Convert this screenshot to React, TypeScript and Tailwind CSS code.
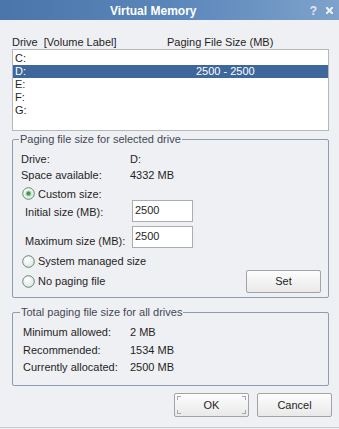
import React from "react";

function Radio({ checked }: { checked?: boolean }) {
  return (
    <svg width="13" height="13" viewBox="0 0 13 13" className="shrink-0">
      <defs>
        <radialGradient id={checked ? "rg1" : "rg0"} cx="40%" cy="35%" r="70%">
          <stop offset="0%" stopColor="#ffffff" />
          <stop offset="100%" stopColor="#dfe4e8" />
        </radialGradient>
      </defs>
      <circle cx="6.5" cy="6.5" r="5.8" fill={`url(#${checked ? "rg1" : "rg0"})`} stroke="#5f8a6c" strokeWidth="1" />
      {checked && (
        <>
          <circle cx="6.5" cy="6.5" r="3" fill="#a9d3a9" />
          <circle cx="6.5" cy="6.5" r="2" fill="#3f9a45" />
        </>
      )}
    </svg>
  );
}

function Btn({ children, focus, className }: { children: React.ReactNode; focus?: boolean; className?: string }) {
  return (
    <div
      className={
        "relative flex justify-center border border-[#a3a3a3] rounded-[2px] bg-gradient-to-b from-[#fdfdfd] to-[#e9e9e9] text-[#1e1e1e] " +
        (className ?? "")
      }
    >
      <span className="leading-[14px]">{children}</span>
      {focus && (
        <>
          <span className="absolute top-[2px] left-[2px] w-[4px] h-[4px] border-t border-l border-[#a8a8a8]" />
          <span className="absolute top-[2px] right-[2px] w-[4px] h-[4px] border-t border-r border-[#a8a8a8]" />
          <span className="absolute bottom-[2px] left-[2px] w-[4px] h-[4px] border-b border-l border-[#a8a8a8]" />
          <span className="absolute bottom-[2px] right-[2px] w-[4px] h-[4px] border-b border-r border-[#a8a8a8]" />
        </>
      )}
    </div>
  );
}

export default function App() {
  const drives = ["C:", "D:", "E:", "F:", "G:"];
  return (
    <div className="w-[339px] h-[429px] overflow-hidden bg-[#eff0f3] font-['Liberation_Sans',Arial,sans-serif] text-[11px] text-[#1f1f1f] flex flex-col">
      {/* Title bar */}
      <div className="h-[20px] shrink-0 flex items-center bg-gradient-to-r from-[#4a75aa] via-[#5a86ba] to-[#7ea2cb] text-white">
        <span className="pl-[110px] text-[12px] font-bold leading-[14px] pt-[1px]">Virtual Memory</span>
        <span className="ml-auto text-[12px] font-bold leading-[14px] text-[#e3eaf3] pt-[1px]">?</span>
        <svg width="7" height="7" viewBox="0 0 7 7" className="ml-[9px] mr-[6px]">
          <path d="M0.8 0.8 L6.2 6.2 M6.2 0.8 L0.8 6.2" stroke="#eef2f7" strokeWidth="2" strokeLinecap="square" />
        </svg>
      </div>

      <div className="pl-[12px] pr-[10px] flex flex-col">
        {/* Header labels */}
        <div className="mt-[15px] h-[14px] leading-[14px] flex">
          <span className="w-[155px] whitespace-pre">Drive  [Volume Label]</span>
          <span>Paging File Size (MB)</span>
        </div>

        {/* List box */}
        <div className="h-[82px] border border-[#b4b7bb] bg-white pt-[2px]">
          {drives.map((d) => {
            const sel = d === "D:";
            return (
              <div
                key={d}
                className={
                  "h-[13px] leading-[13px] flex pl-[2px] " + (sel ? "bg-[#3e679b] text-white" : "text-[#1f1f1f]")
                }
              >
                <span className="w-[181px]">{d}</span>
                {sel && <span>2500 - 2500</span>}
              </div>
            );
          })}
        </div>

        {/* Group 1 */}
        <div className="relative mt-[8px] h-[159px] border border-[#8d9cb1] rounded-[2px] flex flex-col">
          <span className="absolute top-[-8px] left-[6px] px-[1px] leading-[14px] bg-[#eff0f3] text-[#3f4856]">
            Paging file size for selected drive
          </span>
          <div className="mt-[12px] h-[14px] leading-[14px] flex pl-[8px]">
            <span className="w-[109px]">Drive:</span>
            <span>D:</span>
          </div>
          <div className="mt-[2px] h-[14px] leading-[14px] flex pl-[8px]">
            <span className="w-[109px]">Space available:</span>
            <span>4332 MB</span>
          </div>
          <div className="mt-[5px] h-[13px] flex items-center pl-[9px] gap-[3px]">
            <Radio checked />
            <span className="leading-[14px]">Custom size:</span>
          </div>
          <div className="h-[22px] flex pl-[12px]">
            <span className="w-[107px] mt-[5px] leading-[14px]">Initial size (MB):</span>
            <div className="w-[61px] h-[22px] border border-[#abadb3] bg-white pl-[2px] pt-[2px] leading-[14px]">2500</div>
          </div>
          <div className="mt-[4px] h-[22px] flex pl-[12px]">
            <span className="w-[107px] mt-[8px] leading-[14px]">Maximum size (MB):</span>
            <div className="w-[61px] h-[22px] border border-[#abadb3] bg-white pl-[2px] pt-[2px] leading-[14px]">2500</div>
          </div>
          <div className="mt-[6px] h-[14px] flex items-center pl-[9px] gap-[3px]">
            <Radio />
            <span className="leading-[14px]">System managed size</span>
          </div>
          <div className="mt-[2px] h-[23px] flex pl-[9px] pr-[7px]">
            <div className="mt-[4px] h-[14px] flex items-center gap-[3px]">
              <Radio />
              <span className="leading-[14px]">No paging file</span>
            </div>
            <Btn className="ml-auto w-[75px] h-[23px] pt-[3px]">Set</Btn>
          </div>
        </div>

        {/* Group 2 */}
        <div className="relative mt-[14px] h-[74px] border border-[#8d9cb1] rounded-[2px] flex flex-col">
          <span className="absolute top-[-8px] left-[7px] px-[1px] leading-[14px] bg-[#eff0f3] text-[#3f4856]">
            Total paging file size for all drives
          </span>
          <div className="mt-[12px] h-[14px] leading-[14px] flex pl-[10px]">
            <span className="w-[107px]">Minimum allowed:</span>
            <span>2 MB</span>
          </div>
          <div className="mt-[4px] h-[14px] leading-[14px] flex pl-[10px]">
            <span className="w-[107px]">Recommended:</span>
            <span>1534 MB</span>
          </div>
          <div className="mt-[3px] h-[14px] leading-[14px] flex pl-[10px]">
            <span className="w-[107px]">Currently allocated:</span>
            <span>2500 MB</span>
          </div>
        </div>
      </div>

      {/* Buttons */}
      <div className="mt-[7px] flex justify-end gap-[8px] pr-[7px]">
        <Btn focus className="w-[75px] h-[24px] pt-[4px]">OK</Btn>
        <Btn className="w-[75px] h-[24px] pt-[4px]">Cancel</Btn>
      </div>
      <div className="mt-[10px] h-[1px] bg-[#c9cacc]" />
    </div>
  );
}
